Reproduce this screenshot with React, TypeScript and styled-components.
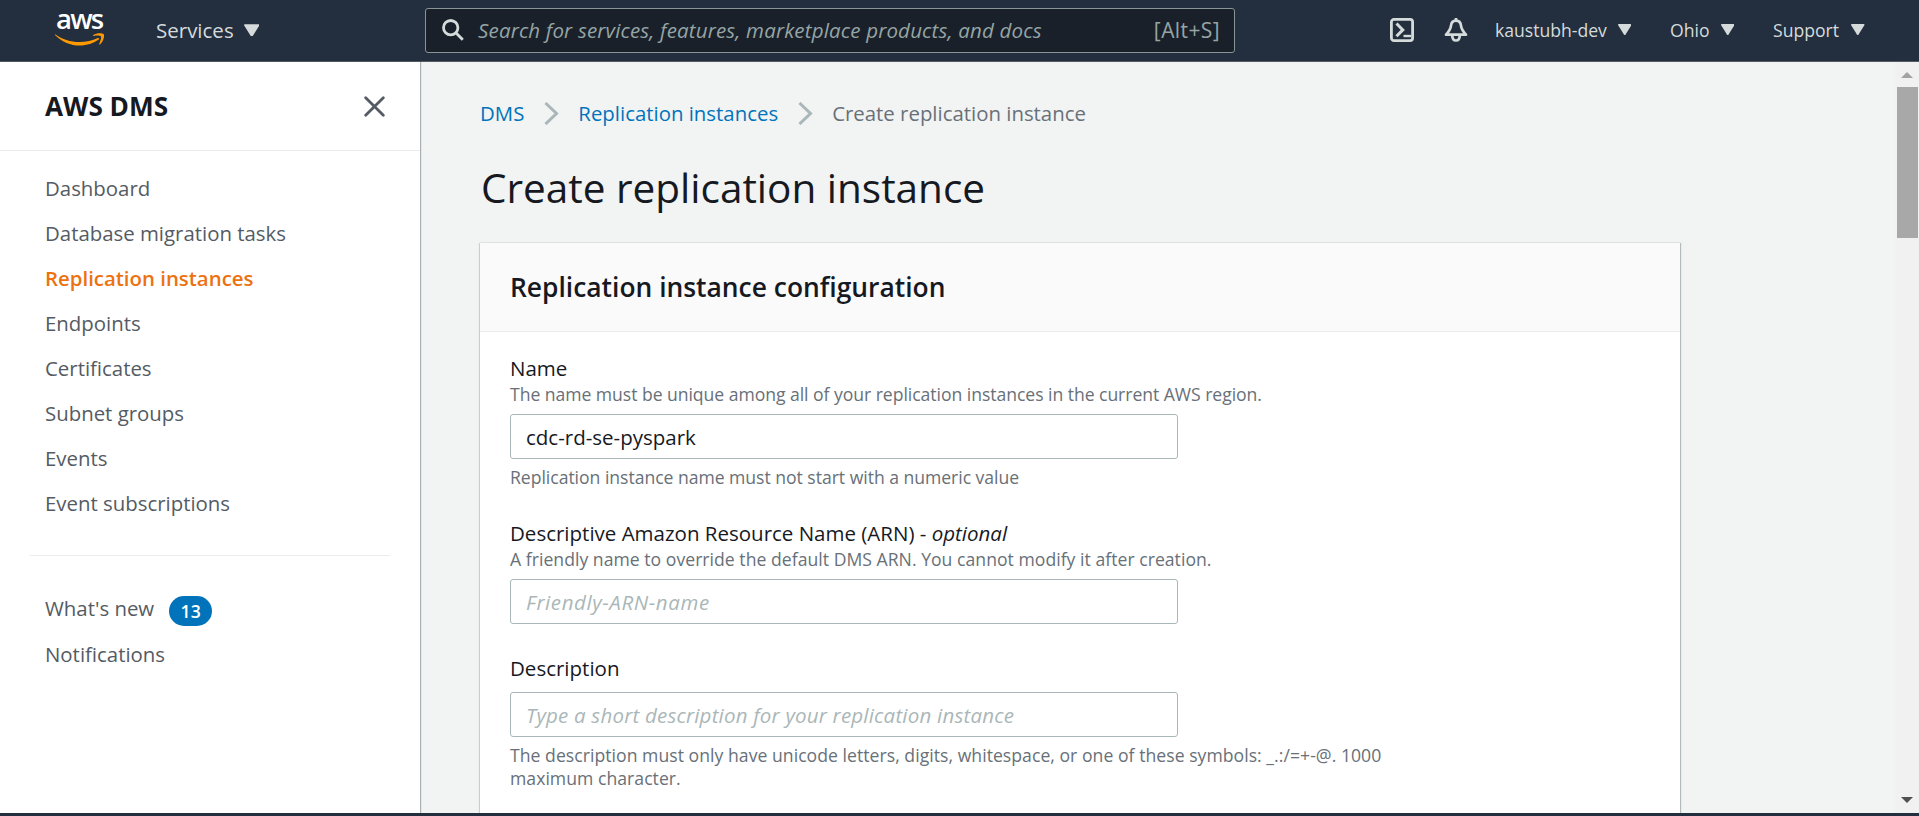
import React from 'react';
import styled, { createGlobalStyle } from 'styled-components';

const GlobalStyle = createGlobalStyle`
  *, *::before, *::after { box-sizing: border-box; }
  html, body { margin: 0; overflow: hidden; }
  body {
    font-family: "Open Sans", "Noto Sans", sans-serif;
    font-size: 20.5px;
    line-height: 33px;
    color: #16191f;
  }
  h1, h2, p, ul, ol { margin: 0; padding: 0; }
  ul, ol { list-style: none; }
  button { border: 0; padding: 0; background: none; color: inherit; font: inherit; }
`;

const Page = styled.div`
  display: flex;
  flex-direction: column;
  width: 1919px;
  height: 816px;
  overflow: hidden;
  background: #f2f3f3;
  border-bottom: 3px solid #232f3e;
`;

const TopBar = styled.header`
  display: flex;
  align-items: center;
  flex: none;
  height: 62px;
  padding: 0 52px 1px 55px;
  background: #232f3e;
  border-bottom: 1px solid #545b64;
  color: #d5dbdb;
`;

const Logo = styled.div`
  display: flex;
  flex-direction: column;
  width: 50px;
  height: 60px;
  svg { display: block; margin-top: -5px; }
`;

const LogoText = styled.span`
  height: 38px;
  padding-left: 1px;
  color: #fff;
  font-size: 27.5px;
  font-weight: 600;
  line-height: 38px;
  letter-spacing: -1.8px;
`;

const ServicesMenu = styled.button`
  display: flex;
  align-items: center;
  gap: 10px;
  width: 269px;
  margin-left: 51px;
`;

const AccountMenu = styled.button<{ $width: number }>`
  display: flex;
  align-items: center;
  justify-content: space-between;
  width: ${(p) => p.$width}px;
  font-size: 17.6px;
`;

const AccountMenus = styled.nav`
  display: flex;
  gap: 39px;
  margin-left: 27px;
`;

const SearchBox = styled.div`
  display: flex;
  align-items: center;
  width: 810px;
  height: 45px;
  padding: 0 14px 0 16px;
  background: #1a2029;
  border: 1px solid #879596;
  border-radius: 3px;
  color: #95a5a6;
`;

const SearchInput = styled.input`
  flex: 1;
  min-width: 0;
  margin-left: 14px;
  padding: 0;
  border: 0;
  outline: 0;
  background: none;
  color: #d5dbdb;
  font: inherit;
  letter-spacing: 0.17px;
  &::placeholder { color: #95a5a6; font-style: italic; opacity: 1; }
`;

const Shortcut = styled.span`
  font-size: 21px;
  letter-spacing: 0.4px;
`;

const ToolIcons = styled.div`
  display: flex;
  gap: 30px;
  margin-left: 155px;
  svg { display: block; }
`;

const Body = styled.div`
  display: flex;
  flex: 1;
  min-height: 0;
`;

const Sidebar = styled.aside`
  position: relative;
  flex: none;
  width: 420px;
  background: #fff;
  box-shadow: 1px 0 1px 0 rgba(0, 28, 36, 0.3);
`;

const SidebarHeader = styled.div`
  display: flex;
  align-items: center;
  justify-content: space-between;
  height: 89px;
  padding: 0 35px 0 45px;
  border-bottom: 1px solid #eaeded;
`;

const SidebarTitle = styled.h2`
  font-size: 26.2px;
  font-weight: 700;
`;

const NavList = styled.ul<{ $gap?: number }>`
  display: flex;
  flex-direction: column;
  gap: ${(p) => p.$gap ?? 12}px;
  padding: 21px 0 0 45px;
`;

const NavItem = styled.li<{ $active?: boolean }>`
  display: flex;
  align-items: center;
  height: 33px;
  color: ${(p) => (p.$active ? '#ec7211' : '#545b64')};
  font-size: 20.4px;
  font-weight: ${(p) => (p.$active ? 600 : 400)};
`;

const SidebarDivider = styled.hr`
  height: 1px;
  margin: 35px 30px 15px;
  border: 0;
  background: #eaeded;
`;

const Badge = styled.span`
  display: flex;
  align-items: center;
  justify-content: center;
  width: 43px;
  height: 30px;
  margin: 4px 0 0 15px;
  border-radius: 15px;
  background: #0073bb;
  color: #fff;
  font-size: 17.6px;
  font-weight: 600;
  line-height: 30px;
`;

const Main = styled.main`
  flex: 1;
  min-width: 0;
  padding: 35px 0 0 60px;
  overflow: hidden;
`;

const Breadcrumbs = styled.ol`
  display: flex;
  align-items: center;
  gap: 19.5px;
  font-size: 20.4px;
  white-space: nowrap;
  svg { display: block; }
`;

const Crumb = styled.li<{ $link?: boolean }>`
  color: ${(p) => (p.$link ? '#0073bb' : '#687078')};
`;

const PageTitle = styled.h1`
  margin: 31px 0 28px 1px;
  font-size: 40.5px;
  font-weight: 400;
  line-height: 54px;
`;

const Card = styled.section`
  width: 1200px;
  height: 700px;
  background: #fff;
  box-shadow: 0 1px 1px 0 rgba(0, 28, 36, 0.3), 1px 0 1px 0 rgba(0, 28, 36, 0.22),
    -1px 0 1px 0 rgba(0, 28, 36, 0.12), 0 -1px 0 0 #eaeded;
`;

const CardHeader = styled.div`
  display: flex;
  align-items: center;
  height: 89px;
  padding: 0 30px;
  background: #fafafa;
  border-bottom: 1px solid #eaeded;
`;

const CardTitle = styled.h2`
  font-size: 26.4px;
  font-weight: 600;
`;

const Form = styled.form`
  display: flex;
  flex-direction: column;
  gap: 29px;
  padding: 21px 30px 0;
`;

const Field = styled.div`
  display: flex;
  flex-direction: column;
`;

const Label = styled.label`
  line-height: 30px;
`;

const Hint = styled.p<{ $track?: number }>`
  width: 900px;
  color: #687078;
  font-size: 17.6px;
  line-height: 23px;
  letter-spacing: ${(p) => p.$track ?? 0}px;
  input + & { margin-top: 7px; }
`;

const TextInput = styled.input<{ $gap: number; $track?: number }>`
  width: 668px;
  height: 45px;
  margin: ${(p) => p.$gap}px 0 0;
  padding: 0 15px;
  background: #fff;
  border: 1px solid #aab7b8;
  border-radius: 3px;
  color: #16191f;
  font: inherit;
  outline: 0;
  &::placeholder {
    color: #aab7b8;
    font-style: italic;
    opacity: 1;
    letter-spacing: ${(p) => p.$track ?? 0}px;
  }
`;

const Scrollbar = styled.div`
  display: flex;
  flex-direction: column;
  align-items: center;
  flex: none;
  width: 24px;
  padding: 10px 0;
  background: #f1f1f1;
  svg { display: block; }
`;

const ScrollThumb = styled.div`
  width: 21px;
  height: 151px;
  margin: 9px 0 auto;
  background: #a8a8a8;
`;

const Caret = ({ size = 13.5 }: { size?: number }) => (
  <svg width={size} height={size * 0.83} viewBox="0 0 16 13" fill="currentColor">
    <path d="M1 0h14a.9.9 0 0 1 .8 1.3L9 12.2q-1 1.2-2 0L.2 1.3A.9.9 0 0 1 1 0z" />
  </svg>
);

const Chevron = () => (
  <svg width="15" height="23" viewBox="0 0 15 23" fill="none" stroke="#aab7b8" strokeWidth="3">
    <path d="M1.5 1l11 10.5-11 10.5" />
  </svg>
);

const AwsLogo = () => (
  <Logo>
    <LogoText>aws</LogoText>
    <svg width="50" height="14" viewBox="0 20 50 14" fill="#f90">
      <path d="M.6 21.4c6.4 4.8 15 7.6 23.8 7.6 6.6 0 13-1.4 18.4-3.9 1-.4 1.9.7.9 1.5C38.8 30.4 31.6 32.6 24.8 32.6 15.6 32.6 7 28.9.5 22.5c-.6-.6-.5-1.4.1-1.1z" />
      <path d="M38.3 21.9c2.6-1.8 8.7-2.2 10.3-.9 1.4 1.3-.2 7.6-3.6 10.4-.6.4-1.1.2-.8-.5.8-2 2.6-6.5 1.7-7.6-.8-1.1-5.2-.7-7.2-.4-.8.1-.9-.5-.4-1z" />
    </svg>
  </Logo>
);

const SearchIcon = () => (
  <svg width="22" height="22" viewBox="0 0 22 22" fill="none" stroke="#d5dbdb" strokeWidth="2.8">
    <circle cx="8.7" cy="8.7" r="7.2" />
    <path d="M13.6 13.6l7.2 7.2" />
  </svg>
);

const ShellIcon = () => (
  <svg width="24" height="24" viewBox="0 0 24 24" fill="none" stroke="#d5dbdb" strokeWidth="2.8">
    <rect x="1.4" y="1.4" width="21.2" height="21.2" rx="2.6" />
    <path d="M6.5 5.5l6.3 6.4-6.3 6.4" strokeWidth="3" />
    <path d="M13.5 18h7.5" strokeWidth="2.4" />
  </svg>
);

const BellIcon = () => (
  <svg width="24" height="24" viewBox="0 0 24 24" fill="none" stroke="#d5dbdb" strokeWidth="2.7" strokeLinejoin="round">
    <path d="M12 0v3" />
    <path d="M12 2.6c-3.2 0-4.7 2.2-5 5.1-.4 3.9-1.6 5.4-5 9h20c-3.4-3.6-4.6-5.1-5-9-.3-2.9-1.8-5.1-5-5.1z" />
    <path d="M8.2 17.5c.1 3.3 1.6 5 3.8 5s3.7-1.7 3.8-5" />
  </svg>
);

const CloseIcon = () => (
  <svg width="21" height="21" viewBox="0 0 21 21" fill="none" stroke="#545b64" strokeWidth="2.8" strokeLinecap="round">
    <path d="M1.7 1.7l17.6 17.6M19.3 1.7L1.7 19.3" />
  </svg>
);

const services = [
  'Dashboard',
  'Database migration tasks',
  'Replication instances',
  'Endpoints',
  'Certificates',
  'Subnet groups',
  'Events',
  'Event subscriptions',
];

const menus = [
  { label: 'kaustubh-dev', width: 136 },
  { label: 'Ohio', width: 64 },
  { label: 'Support', width: 91.5 },
];

export default function App() {
  return (
    <Page>
      <GlobalStyle />
      <TopBar>
        <AwsLogo />
        <ServicesMenu>
          Services <Caret size={15.5} />
        </ServicesMenu>
        <SearchBox>
          <SearchIcon />
          <SearchInput placeholder="Search for services, features, marketplace products, and docs" />
          <Shortcut>[Alt+S]</Shortcut>
        </SearchBox>
        <ToolIcons>
          <ShellIcon />
          <BellIcon />
        </ToolIcons>
        <AccountMenus>
          {menus.map((m) => (
            <AccountMenu key={m.label} $width={m.width}>
              {m.label} <Caret />
            </AccountMenu>
          ))}
        </AccountMenus>
      </TopBar>
      <Body>
        <Sidebar>
          <SidebarHeader>
            <SidebarTitle>AWS DMS</SidebarTitle>
            <CloseIcon />
          </SidebarHeader>
          <NavList>
            {services.map((s) => (
              <NavItem key={s} $active={s === 'Replication instances'}>{s}</NavItem>
            ))}
          </NavList>
          <SidebarDivider />
          <NavList $gap={13}>
            <NavItem>
              What's new <Badge>13</Badge>
            </NavItem>
            <NavItem>Notifications</NavItem>
          </NavList>
        </Sidebar>
        <Main>
          <Breadcrumbs>
            <Crumb $link>DMS</Crumb>
            <Chevron />
            <Crumb $link>Replication instances</Crumb>
            <Chevron />
            <Crumb>Create replication instance</Crumb>
          </Breadcrumbs>
          <PageTitle>Create replication instance</PageTitle>
          <Card>
            <CardHeader>
              <CardTitle>Replication instance configuration</CardTitle>
            </CardHeader>
            <Form>
              <Field>
                <Label htmlFor="name">Name</Label>
                <Hint $track={-0.045}>
                  The name must be unique among all of your replication instances in the current AWS region.
                </Hint>
                <TextInput id="name" $gap={8} defaultValue="cdc-rd-se-pyspark" />
                <Hint $track={-0.03}>Replication instance name must not start with a numeric value</Hint>
              </Field>
              <Field>
                <Label htmlFor="arn">
                  Descriptive Amazon Resource Name (ARN) - <i>optional</i>
                </Label>
                <Hint $track={0.03}>
                  A friendly name to override the default DMS ARN. You cannot modify it after creation.
                </Hint>
                <TextInput id="arn" $gap={8} $track={0.6} placeholder="Friendly-ARN-name" />
              </Field>
              <Field>
                <Label htmlFor="description">Description</Label>
                <TextInput
                  id="description"
                  $gap={9}
                  $track={0.2}
                  placeholder="Type a short description for your replication instance"
                />
                <Hint $track={0.04}>
                  The description must only have unicode letters, digits, whitespace, or one of these symbols:
                  _.:/=+-@. 1000 maximum character.
                </Hint>
              </Field>
            </Form>
          </Card>
        </Main>
        <Scrollbar>
          <svg width="12" height="6" viewBox="0 0 12 6" fill="#a3a3a3">
            <path d="M0 6l6-6 6 6z" />
          </svg>
          <ScrollThumb />
          <svg width="12" height="6" viewBox="0 0 12 6" fill="#505050">
            <path d="M0 0l6 6 6-6z" />
          </svg>
        </Scrollbar>
      </Body>
    </Page>
  );
}
